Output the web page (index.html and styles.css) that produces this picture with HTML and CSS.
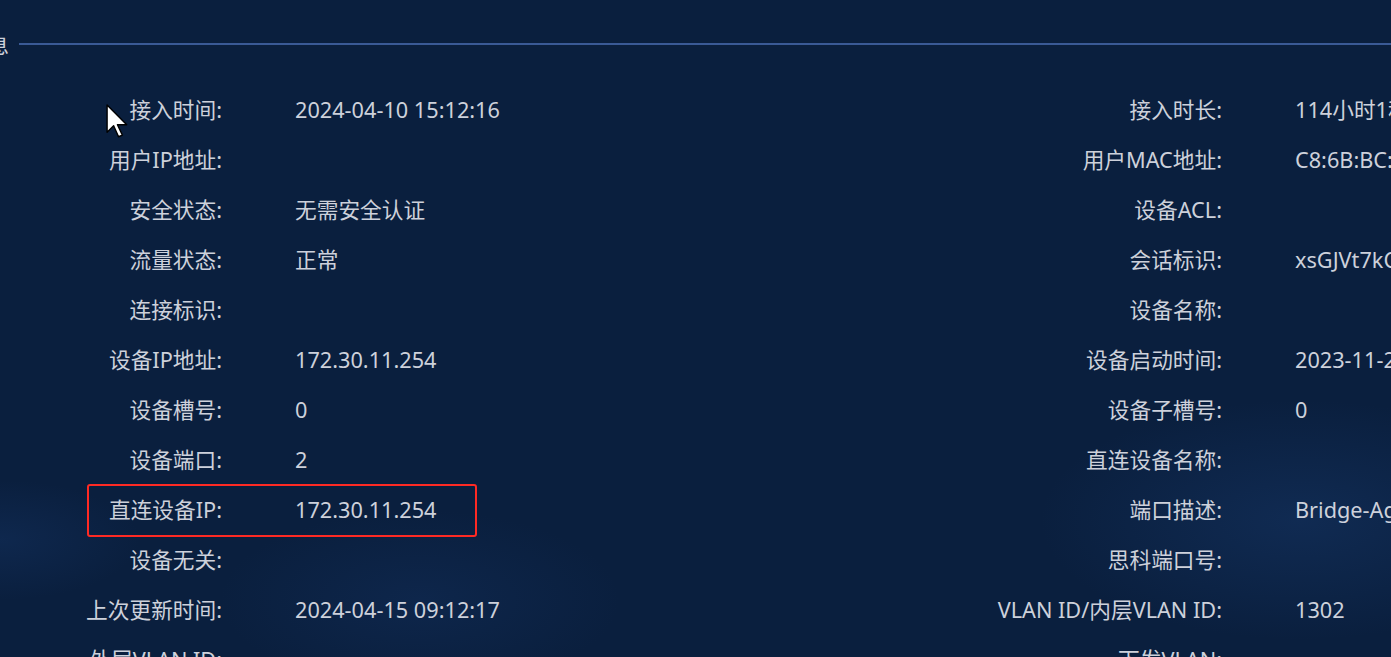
FILE: index.html
```html
<!DOCTYPE html>
<html lang="zh-CN">
<head>
  <meta charset="UTF-8">
  <title>用户详细信息</title>
  <link rel="stylesheet" href="styles.css">
</head>
<body>
  <div class="panel">
    <div class="section-title">
      <span class="title-text">信息</span>
      <span class="title-line"></span>
    </div>

    <div class="info">
      <div class="label">接入时间:</div>
      <div class="value">2024-04-10 15:12:16</div>
      <div class="label">接入时长:</div>
      <div class="value">114小时1秒</div>

      <div class="label">用户IP地址:</div>
      <div class="value"></div>
      <div class="label">用户MAC地址:</div>
      <div class="value">C8:6B:BC:2A:41:0F</div>

      <div class="label">安全状态:</div>
      <div class="value">无需安全认证</div>
      <div class="label">设备ACL:</div>
      <div class="value"></div>

      <div class="label">流量状态:</div>
      <div class="value">正常</div>
      <div class="label">会话标识:</div>
      <div class="value">xsGJVt7kQ2</div>

      <div class="label">连接标识:</div>
      <div class="value"></div>
      <div class="label">设备名称:</div>
      <div class="value"></div>

      <div class="label">设备IP地址:</div>
      <div class="value">172.30.11.254</div>
      <div class="label">设备启动时间:</div>
      <div class="value">2023-11-20 08:00:00</div>

      <div class="label">设备槽号:</div>
      <div class="value">0</div>
      <div class="label">设备子槽号:</div>
      <div class="value">0</div>

      <div class="label">设备端口:</div>
      <div class="value">2</div>
      <div class="label">直连设备名称:</div>
      <div class="value"></div>

      <div class="label">直连设备IP:</div>
      <div class="value">172.30.11.254</div>
      <div class="label">端口描述:</div>
      <div class="value">Bridge-Aggregation1</div>

      <div class="label">设备无关:</div>
      <div class="value"></div>
      <div class="label">思科端口号:</div>
      <div class="value"></div>

      <div class="label">上次更新时间:</div>
      <div class="value">2024-04-15 09:12:17</div>
      <div class="label">VLAN ID/内层VLAN ID:</div>
      <div class="value">1302</div>

      <div class="label">外层VLAN ID:</div>
      <div class="value"></div>
      <div class="label">下发VLAN:</div>
      <div class="value"></div>
    </div>

    <!-- annotation over the screenshot -->
    <div class="highlight"></div>
    <svg class="cursor" width="24" height="36" viewBox="0 0 22 33">
      <path d="M1 1 L1 26 L7 20 L11.5 30 L15 28.5 L10.5 19 L19 19 Z" fill="#fff" stroke="#000" stroke-width="1.3" stroke-linejoin="round"/>
    </svg>
  </div>
</body>
</html>
```

FILE: styles.css
```css
:root {
  --bg: #0a1f3e;
  --text: #cdd1db;
  --line: #3a5a96;
  --mark: #ff2a24;
}

html, body {
  margin: 0;
  height: 100%;
  overflow: hidden;
}

body {
  background:
    radial-gradient(ellipse 260px 120px at 1300px 520px, rgba(30, 70, 130, 0.3), transparent),
    radial-gradient(ellipse 200px 90px at 420px 600px, rgba(25, 60, 115, 0.25), transparent),
    radial-gradient(ellipse 140px 60px at 0px 540px, rgba(25, 60, 115, 0.3), transparent),
    var(--bg);
  font-family: "Noto Sans", "Noto Sans CJK SC", sans-serif;
  color: var(--text);
}

.panel {
  position: relative;
  height: 100%;
}

.section-title {
  display: flex;
  align-items: center;
  gap: 10px;
  height: 88px;
}

.title-text {
  font-size: 21px;
  white-space: nowrap;
  margin-left: -33px;
}

.title-line {
  flex: 1;
  height: 2px;
  background: var(--line);
}

.info {
  display: grid;
  grid-template-columns: 222px 554px 300px 1fr;
  grid-auto-rows: 50px;
  column-gap: 73px;
  margin-top: -3px;
  font-size: 21.7px;
  line-height: 50px;
}

.label {
  text-align: right;
  white-space: nowrap;
}

.value {
  white-space: nowrap;
  overflow: hidden;
}

.highlight {
  position: absolute;
  left: 87px;
  top: 484px;
  width: 386px;
  height: 49px;
  border: 2.5px solid var(--mark);
  border-radius: 3px;
}

.cursor {
  position: absolute;
  left: 106px;
  top: 104px;
}
```
